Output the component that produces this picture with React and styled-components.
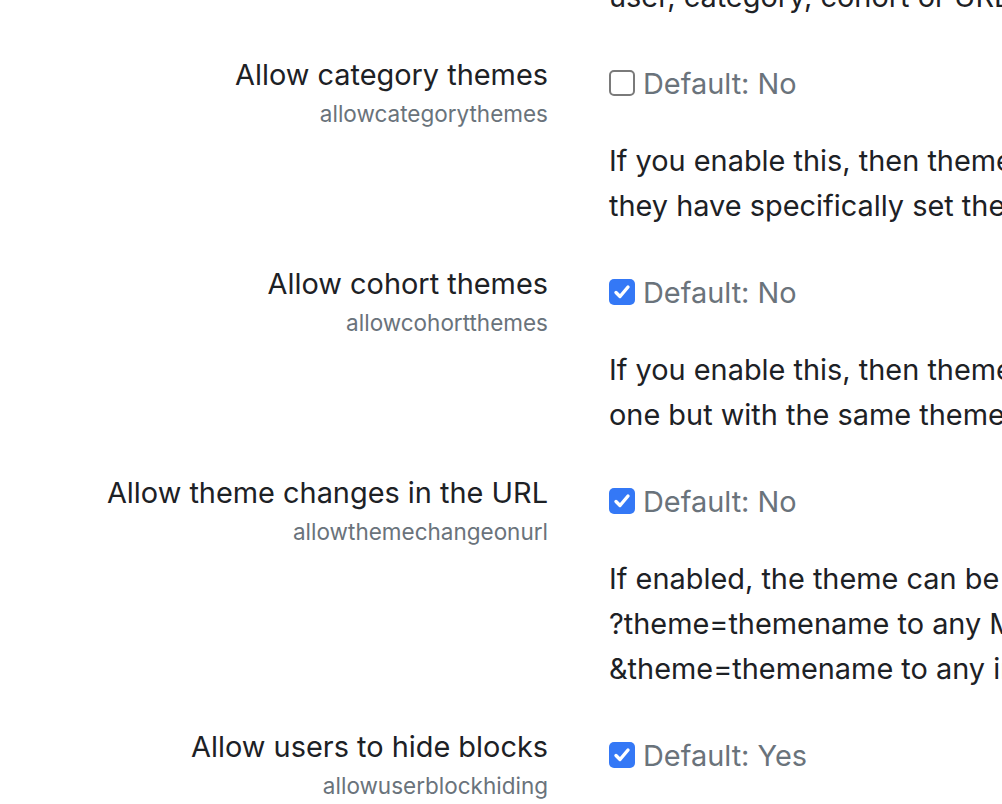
import React from "react";
import styled, { createGlobalStyle } from "styled-components";

const GlobalStyle = createGlobalStyle`
  html, body {
    margin: 0;
    padding: 0;
    background: #fff;
    overflow: hidden;
  }
  body {
    font-family: Inter, "Noto Sans", "Liberation Sans", sans-serif;
    color: #1d2125;
  }
`;

const Page = styled.div`
  width: 1002px;
  height: 804px;
  overflow: hidden;
`;

const SettingsList = styled.div`
  margin-top: -157px;
`;

const SettingRow = styled.div`
  display: grid;
  grid-template-columns: 548px 1fr;
  column-gap: 61px;
  margin-bottom: 33px;
`;

const LabelCell = styled.div`
  text-align: right;
`;

const Label = styled.label`
  display: block;
  font-size: 28.9px;
  line-height: 45px;
  white-space: nowrap;
`;

const ShortName = styled.div`
  font-size: 22.5px;
  line-height: 30px;
  color: #6a737b;
  margin-top: 2px;
`;

const SettingCell = styled.div`
  padding-top: 9px;
  min-width: 0;
`;

const CheckRow = styled.div`
  display: flex;
  align-items: center;
  gap: 8px;
  height: 45px;
`;

const Box = styled.span`
  width: 26px;
  height: 26px;
  box-sizing: border-box;
  border-radius: 5px;
  flex: none;
  display: flex;
  align-items: center;
  justify-content: center;
  margin-top: -2px;
  background: ${(p) => (p.checked ? "#3478f6" : "#fff")};
  border: ${(p) => (p.checked ? "none" : "2px solid #7a7a7a")};
`;

const DefaultInfo = styled.span`
  font-size: 28.9px;
  line-height: 45px;
  color: #6a737b;
  white-space: nowrap;
`;

const Description = styled.div`
  margin-top: 32px;
  font-size: 28.9px;
  line-height: 45px;
  white-space: nowrap;
`;

function Checkbox({ checked }) {
  return (
    <Box checked={checked}>
      {checked && (
        <svg width="20" height="20" viewBox="0 0 20 20" fill="none">
          <path
            d="M4 10.5 L8 14.5 L16 5"
            stroke="#fff"
            strokeWidth="3.4"
            strokeLinecap="round"
            strokeLinejoin="round"
          />
        </svg>
      )}
    </Box>
  );
}

const settings = [
  {
    label: "Allow course themes",
    name: "allowcoursethemes",
    checked: false,
    def: "No",
    lines: [
      "If you enable this, courses will be able to set their own themes. Course themes override all other theme choices (site,",
      "user, category, cohort or URL-defined themes).",
    ],
  },
  {
    label: "Allow category themes",
    name: "allowcategorythemes",
    checked: false,
    def: "No",
    lines: [
      "If you enable this, then themes can be set at the category level. This will affect all child categories and courses unless",
      "they have specifically set their own theme. WARNING: Enabling category themes may affect performance.",
    ],
  },
  {
    label: "Allow cohort themes",
    name: "allowcohortthemes",
    checked: true,
    def: "No",
    lines: [
      "If you enable this, then themes can be set at the cohort level. This will affect all users with only one cohort or more than",
      "one but with the same theme.",
    ],
  },
  {
    label: "Allow theme changes in the URL",
    name: "allowthemechangeonurl",
    checked: true,
    def: "No",
    lines: [
      "If enabled, the theme can be changed by adding either:",
      "?theme=themename to any Moodle URL (eg: https://mysite.com/index.php?theme=themename ) or",
      "&theme=themename to any internal Moodle URL (eg: https://mysite.com/course/view.php?id=2&theme=themename ).",
    ],
  },
  {
    label: "Allow users to hide blocks",
    name: "allowuserblockhiding",
    checked: true,
    def: "Yes",
    lines: [
      "Do you want to allow users to hide/show side blocks throughout this site? This feature uses Javascript and cookies to",
      "remember the state of each collapsible block, and only affects the user's own view.",
    ],
  },
];

export default function App() {
  return (
    <Page>
      <GlobalStyle />
      <SettingsList>
        {settings.map((s) => (
          <SettingRow key={s.name}>
            <LabelCell>
              <Label htmlFor={`id_s__${s.name}`}>{s.label}</Label>
              <ShortName>{s.name}</ShortName>
            </LabelCell>
            <SettingCell>
              <CheckRow>
                <Checkbox checked={s.checked} />
                <DefaultInfo>Default: {s.def}</DefaultInfo>
              </CheckRow>
              <Description>
                {s.lines.map((l, i) => (
                  <div key={i}>{l}</div>
                ))}
              </Description>
            </SettingCell>
          </SettingRow>
        ))}
      </SettingsList>
    </Page>
  );
}
